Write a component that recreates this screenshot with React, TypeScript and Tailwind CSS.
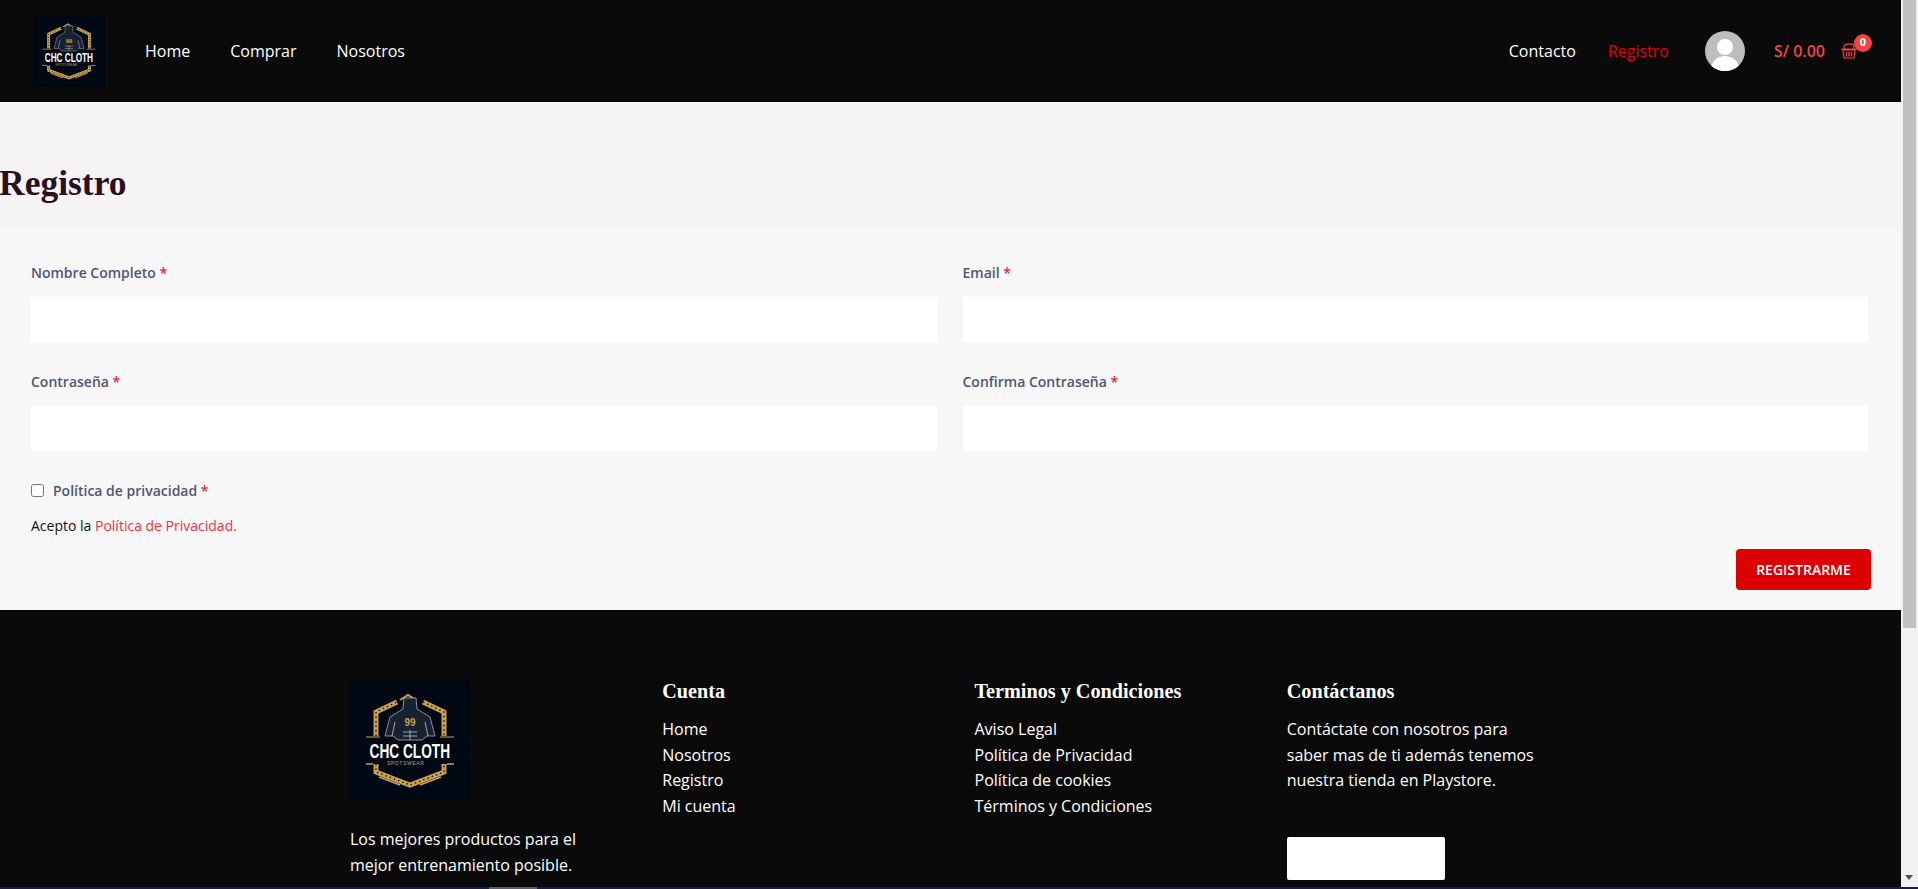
const bodyFont = "font-['Open_Sans','Noto_Sans',sans-serif]";
const headFont = "font-['Liberation_Serif','DejaVu_Serif',serif]";

const Logo = ({ className }: { className: string }) => (
  <svg viewBox="0 0 120 120" className={className}>
    <rect width="120" height="120" fill="#000913" />
    {/* gold badge bands */}
    <path d="M26 56V32L47 22M73 22L94 32V56" fill="none" stroke="#c9a050" strokeWidth="5" />
    <path d="M26 56V32L47 22M73 22L94 32V56" fill="none" stroke="#000913" strokeWidth="1.3" strokeDasharray="1.5 3" />
    <path d="M50 20L58 15L66 20" fill="none" stroke="#c9a050" strokeWidth="2" />
    <path d="M26 84V92L60 105L94 92V84" fill="none" stroke="#c9a050" strokeWidth="5" />
    <path d="M26 84V92L60 105L94 92V84" fill="none" stroke="#000913" strokeWidth="1.3" strokeDasharray="1.5 3" />
    {/* figure */}
    <path d="M54 18H66L67 29L80 37L85 56H77L72 60H48L43 56H35L40 37L53 29Z" fill="#18212f" stroke="#9a9ca0" strokeWidth="0.9" />
    <path d="M45 42L42 56M75 42L78 56M60 50V60M53 52H67M53 56H67" stroke="#c3c5c8" strokeWidth="0.8" fill="none" />
    <text x="60" y="46" textAnchor="middle" fontSize="10" fontWeight="700" fill="#c9a050" fontFamily="Liberation Sans">99</text>
    <path d="M16 57H30M90 57H104" stroke="#c9a050" strokeWidth="1.2" />
    <text transform="translate(19.5 78) scale(1 1.45)" fontSize="13.7" fontWeight="700" fill="#ffffff" fontFamily="Liberation Sans">CHC CLOTH</text>
    <text x="37" y="85" fontSize="5" letterSpacing="0.6" fill="#b5a27a" fontFamily="Liberation Sans">SPOTSWEAR</text>
    <path d="M16 84H23M97 84H104" stroke="#c9a050" strokeWidth="1.5" />
    <path d="M29 97L50 105M91 97L70 105" stroke="#c9a050" strokeWidth="1.5" />
  </svg>
);

const Avatar = () => (
  <svg viewBox="0 0 40 40" className="h-10 w-10 rounded-full">
    <rect width="40" height="40" fill="#bdbdbd" />
    <circle cx="20" cy="16" r="8" fill="#ffffff" />
    <path d="M5 40C6 30 13 25 20 25C27 25 34 30 35 40Z" fill="#ffffff" />
  </svg>
);

const Basket = () => (
  <svg viewBox="0 0 16 16" className="h-4 w-4" fill="none" stroke="#ef4444" strokeWidth="1.2">
    <path d="M3 6V4C3 2 4 1.2 5.5 1.2H10.5C12 1.2 13 2 13 4V6" />
    <path d="M0.5 6.5H15.5" strokeWidth="2" />
    <path d="M2 7.5L3 15H13L14 7.5" />
    <path d="M5.5 9V13.5M8 9V13.5M10.5 9V13.5" strokeWidth="1.4" />
  </svg>
);

const Label = ({ text }: { text: string }) => (
  <label className="mb-[14px] block text-[14px] leading-[21px] font-semibold text-[#4f5672]">
    {text} <span className="text-[#f5193c]">*</span>
  </label>
);

const Field = ({ text, type }: { text: string; type: string }) => (
  <div>
    <Label text={text} />
    <input type={type} className="block h-[45px] w-full bg-white px-3 outline-none" />
  </div>
);

const FooterLinks = ({ title, links }: { title: string; links: string[] }) => (
  <div>
    <h4 className={`${headFont} mb-[14px] text-[20.2px] leading-[23px] font-bold text-white`}>{title}</h4>
    <ul className="text-[16px] leading-[25.6px] text-white">
      {links.map((l) => (
        <li key={l}>{l}</li>
      ))}
    </ul>
  </div>
);

export default function App() {
  return (
    <div className={`${bodyFont} flex h-[889px] w-full flex-col overflow-hidden bg-[#f1f1f1]`}>
      <div className="flex min-h-0 flex-1">
        <div className="min-w-0 flex-1">
          <header className="flex h-[102px] items-center border-b border-black bg-[#0a0a0a] pr-[44px] pl-[33px] text-[16px] text-white">
            <Logo className="h-[72px] w-[72px]" />
            <nav className="ml-10 flex gap-10">
              <a>Home</a>
              <a>Comprar</a>
              <a>Nosotros</a>
            </nav>
            <div className="ml-auto flex items-center">
              <a>Contacto</a>
              <a className="ml-8 text-[#e60000]">Registro</a>
              <div className="ml-9">
                <Avatar />
              </div>
              <span className="ml-[29px] font-semibold text-[#ef4444]">S/ 0.00</span>
              <div className="relative ml-[16px]">
                <Basket />
                <span className="absolute -top-[9px] left-[13px] flex h-[18px] w-[18px] items-center justify-center rounded-full bg-[#ef4444] text-[11px] font-bold text-white">
                  0
                </span>
              </div>
            </div>
          </header>

          <section className="flex h-[124px] items-end bg-[#f6f3f4] pb-[22px]">
            <h1 className={`${headFont} -ml-px text-[35.5px] leading-[42px] font-bold text-[#2a0f1e]`}>Registro</h1>
          </section>

          <section className="h-[384px] bg-[#f7f7f7] pt-[36px] pr-[33px] pl-[31px]">
            <div className="grid grid-cols-2 gap-x-[26px] gap-y-[29px]">
              <Field text="Nombre Completo" type="text" />
              <Field text="Email" type="email" />
              <Field text="Contraseña" type="password" />
              <Field text="Confirma Contraseña" type="password" />
            </div>
            <div className="mt-[29px] flex items-center">
              <input type="checkbox" className="h-[13px] w-[13px]" />
              <span className="ml-[9px] text-[14px] leading-[21px] font-semibold text-[#4f5672]">
                Política de privacidad <span className="text-[#f5193c]">*</span>
              </span>
            </div>
            <p className="mt-[14px] text-[14px] leading-[21px] text-[#111111]">
              Acepto la <a className="text-[#f0343c]">Política de Privacidad.</a>
            </p>
            <div className="mt-[13px] flex justify-end">
              <button className="-mr-[3px] h-[41px] w-[135px] rounded-[4px] bg-[#dc0000] text-[14px] font-semibold text-white">
                REGISTRARME
              </button>
            </div>
          </section>

          <footer className="h-[277px] bg-[#0a0a0a] pt-[70px] pl-[350px]">
            <div className="grid w-[1249px] grid-cols-4">
              <div>
                <Logo className="h-[120px] w-[120px]" />
                <p className="mt-[27px] text-[16px] leading-[25.6px] text-white">
                  Los mejores productos para el
                  <br />
                  mejor entrenamiento posible.
                </p>
              </div>
              <FooterLinks title="Cuenta" links={["Home", "Nosotros", "Registro", "Mi cuenta"]} />
              <FooterLinks
                title="Terminos y Condiciones"
                links={["Aviso Legal", "Política de Privacidad", "Política de cookies", "Términos y Condiciones"]}
              />
              <div>
                <h4 className={`${headFont} mb-[14px] text-[20.2px] leading-[23px] font-bold text-white`}>Contáctanos</h4>
                <p className="text-[16px] leading-[25.6px] text-white">
                  Contáctate con nosotros para
                  <br />
                  saber mas de ti además tenemos
                  <br />
                  nuestra tienda en Playstore.
                </p>
                <div className="mt-[43px] h-[43px] w-[158px] rounded-[2px] bg-white" />
              </div>
            </div>
          </footer>
        </div>

        <div className="relative w-[17px] shrink-0 bg-[#f1f1f1]">
          <div className="mx-auto h-[628px] w-[13px] bg-[#c1c1c1]" />
          <div className="absolute bottom-[7px] left-[4px] h-0 w-0 border-x-[4px] border-t-[5px] border-x-transparent border-t-[#505050]" />
        </div>
      </div>
      <div className="relative h-[2px] shrink-0 bg-[#1a1a4a]">
        <div className="absolute top-0 left-[489px] h-[2px] w-[48px] bg-[#5a5a6a]" />
      </div>
    </div>
  );
}
